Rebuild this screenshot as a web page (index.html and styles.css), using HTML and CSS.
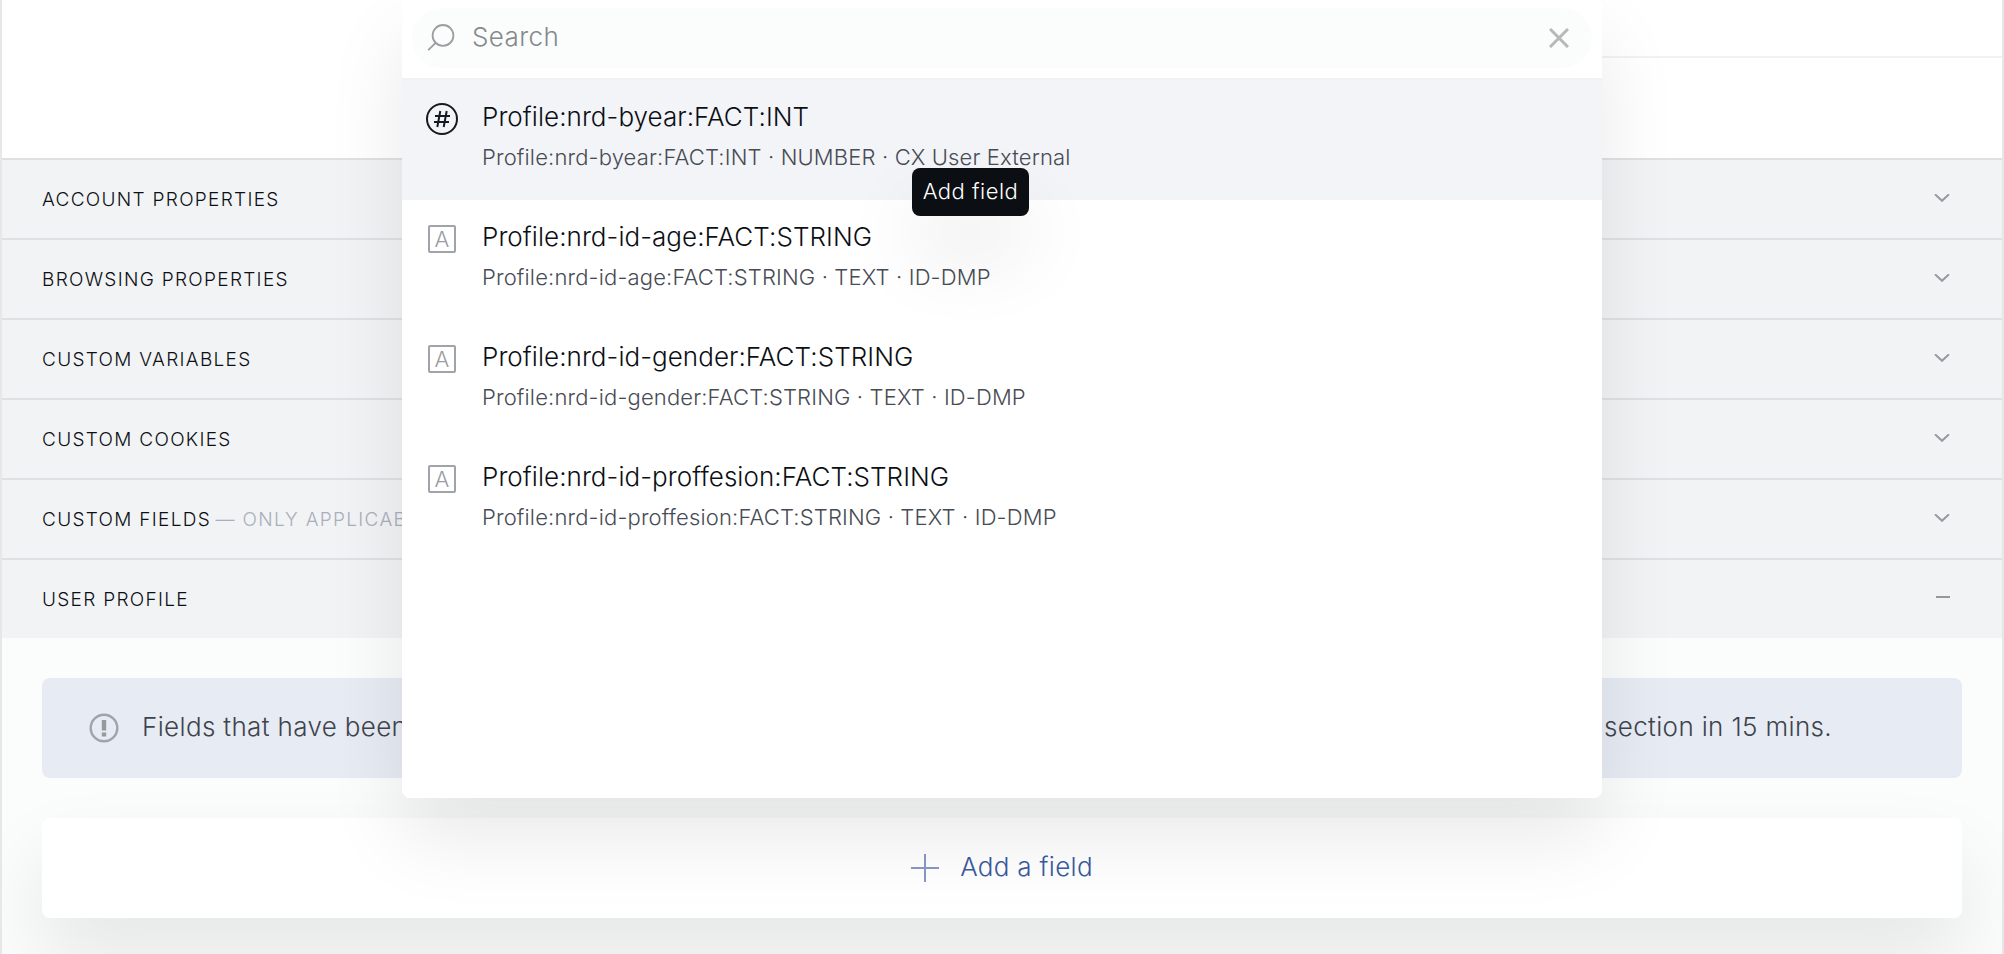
FILE: index.html
```
<!DOCTYPE html>
<html lang="en">
	<head>
		<meta charset="UTF-8">
		<meta name="viewport" content="width=device-width,initial-scale=1">
		<title>Add a field</title>
		<link rel="stylesheet" href="styles.css">
	</head>
	<body>
		<main class="panel">
			<div class="panel-top">
				<div class="panel-top__side"></div>
			</div>
			<section class="section">
				<h2 class="section__title">Account properties</h2>
				<svg class="section__icon" width="16" height="8" viewBox="0 0 16 8"><path d="M1 .3l7 6.5 7-6.5"/></svg>
			</section>
			<section class="section">
				<h2 class="section__title">Browsing properties</h2>
				<svg class="section__icon" width="16" height="8" viewBox="0 0 16 8"><path d="M1 .3l7 6.5 7-6.5"/></svg>
			</section>
			<section class="section">
				<h2 class="section__title">Custom variables</h2>
				<svg class="section__icon" width="16" height="8" viewBox="0 0 16 8"><path d="M1 .3l7 6.5 7-6.5"/></svg>
			</section>
			<section class="section">
				<h2 class="section__title">Custom cookies</h2>
				<svg class="section__icon" width="16" height="8" viewBox="0 0 16 8"><path d="M1 .3l7 6.5 7-6.5"/></svg>
			</section>
			<section class="section">
				<h2 class="section__title">Custom fields <span class="section__note">— only applicable</span></h2>
				<svg class="section__icon" width="16" height="8" viewBox="0 0 16 8"><path d="M1 .3l7 6.5 7-6.5"/></svg>
			</section>
			<section class="section">
				<h2 class="section__title">User profile</h2>
				<svg class="section__icon" width="16" height="8" viewBox="0 0 16 8"><path d="M2 3h14"/></svg>
			</section>
			<div class="section-body">
				<div class="notice">
					<svg class="notice__icon" width="30" height="30" viewBox="0 0 30 30">
						<circle cx="15" cy="15" r="13.3"/>
						<path d="M15 7v10.5M15 19.5v4"/>
					</svg>
					<p class="notice__text"><span>Fields that have been</span><span>section in 15 mins.</span></p>
				</div>
				<button class="add-button" type="button">
					<svg class="add-button__icon" width="28" height="28" viewBox="0 0 28 28"><path d="M14 0v28M0 14h28"/></svg>
					<span>Add a field</span>
				</button>
			</div>
		</main>

		<div class="dialog">
			<div class="dialog__head">
				<div class="search">
					<svg class="search__icon" width="28" height="28" viewBox="0 0 28 28">
						<circle cx="16" cy="11.4" r="10.4"/>
						<path d="M8.6 18.8L1.2 26.2"/>
					</svg>
					<span class="search__text">Search</span>
					<svg class="search__clear" width="20" height="20" viewBox="0 0 20 20"><path d="M1 1l18 18M19 1L1 19"/></svg>
				</div>
			</div>
			<ul class="list">
				<li class="item is-active">
					<svg class="item__number" width="32" height="32" viewBox="0 0 32 32">
						<circle cx="16" cy="16" r="15"/>
						<path d="M14.3 8l-3 16M20.7 8l-3 16M9 13h15M8 19h15"/>
					</svg>
					<div>
						<p class="item__name">Profile:nrd-byear:FACT:INT</p>
						<p class="item__meta">Profile:nrd-byear:FACT:INT · NUMBER · CX User External</p>
					</div>
					<span class="tooltip">Add field</span>
				</li>
				<li class="item">
					<span class="item__string">A</span>
					<div>
						<p class="item__name">Profile:nrd-id-age:FACT:STRING</p>
						<p class="item__meta">Profile:nrd-id-age:FACT:STRING · TEXT · ID-DMP</p>
					</div>
				</li>
				<li class="item">
					<span class="item__string">A</span>
					<div>
						<p class="item__name">Profile:nrd-id-gender:FACT:STRING</p>
						<p class="item__meta">Profile:nrd-id-gender:FACT:STRING · TEXT · ID-DMP</p>
					</div>
				</li>
				<li class="item">
					<span class="item__string">A</span>
					<div>
						<p class="item__name">Profile:nrd-id-proffesion:FACT:STRING</p>
						<p class="item__meta">Profile:nrd-id-proffesion:FACT:STRING · TEXT · ID-DMP</p>
					</div>
				</li>
			</ul>
		</div>
	</body>
</html>
```
FILE: styles.css
```
*
{
	box-sizing: border-box;
}

body
{
	margin: 0;
	height: 954px;
	overflow: hidden;
	background-color: #fff;
	color: #0c0f14;
	font-family: Inter, "Liberation Sans", sans-serif;
	font-weight: 350;
	font-size: 26px;
}

h2,
p,
ul
{
	margin: 0;
	padding: 0;
	font-weight: 350;
}

svg
{
	display: block;
	flex: none;
	fill: none;
}

.panel
{
	height: 954px;
	overflow: hidden;
	border-left: 2px solid #e6e7e9;
	border-right: 2px solid #e6e7e9;
	background-color: #fbfdfc;
}

.panel-top
{
	display: flex;
	justify-content: flex-end;
	height: 158px;
	background-color: #fff;
}

.panel-top__side
{
	width: 50%;
	height: 58px;
	border-bottom: 2px solid #f2f2f3;
}

/* accordion rows */
.section
{
	display: flex;
	align-items: center;
	justify-content: space-between;
	height: 80px;
	padding: 0 52px 0 40px;
	border-top: 2px solid #dfe0e3;
	background-color: #f2f3f5;
}

.section__title
{
	font-size: 19px;
	letter-spacing: 1.3px;
	text-transform: uppercase;
}

.section__note
{
	margin-left: -2px;
	color: #a9afbb;
}

.section__icon
{
	margin-bottom: 3px;
	stroke: #96989c;
	stroke-width: 2;
}

.section-body
{
	padding: 40px;
}

.notice
{
	display: flex;
	align-items: center;
	height: 100px;
	padding: 0 130px 0 47px;
	border-radius: 8px;
	background-color: #e7ebf4;
}

.notice__icon
{
	margin-right: 23px;
	stroke: #a0a3a8;
	stroke-width: 2.4;
}

.notice__icon path
{
	stroke: #96999e;
	stroke-width: 4.4;
}

.notice__text
{
	display: flex;
	flex: 1;
	justify-content: space-between;
	padding-bottom: 3px;
	color: #3f434c;
	letter-spacing: 0.35px;
}

.add-button
{
	display: flex;
	align-items: center;
	justify-content: center;
	gap: 21px;
	width: 100%;
	height: 100px;
	margin-top: 40px;
	padding: 0;
	border: 0;
	border-radius: 8px;
	background-color: #fff;
	box-shadow: 0 40px 80px rgba(0, 0, 0, 0.09);
	color: #3a5a9f;
	font: inherit;
	letter-spacing: 0.3px;
}

.add-button span
{
	padding-bottom: 3px;
}

.add-button__icon
{
	stroke: #8799c5;
	stroke-width: 2;
}

/* field picker */
.dialog
{
	position: absolute;
	top: -2px;
	left: 402px;
	width: 1200px;
	height: 800px;
	border-radius: 8px;
	background-color: #fff;
	box-shadow: 0 40px 80px rgba(0, 0, 0, 0.09);
}

.dialog__head
{
	height: 82px;
	padding: 10px;
	border-bottom: 2px solid #f2f2f3;
}

.search
{
	display: flex;
	align-items: center;
	height: 60px;
	padding: 0 23px 0 15px;
	border-radius: 30px;
	background-color: #fbfdfc;
}

.search__icon
{
	stroke: #9b9da0;
	stroke-width: 1.8;
}

.search__text
{
	flex: 1;
	padding: 0 0 3px 17px;
	color: #85888d;
	letter-spacing: 0.4px;
}

.search__clear
{
	stroke: #b7b9b9;
	stroke-width: 3;
}

.list
{
	list-style: none;
}

.item
{
	position: relative;
	display: grid;
	grid-template-columns: 56px 1fr;
	align-items: start;
	height: 120px;
	padding: 20px 24px 0;
}

.item.is-active
{
	background-color: #f3f4f8;
}

.item__number
{
	margin-top: 3px;
	stroke: #141a23;
	stroke-width: 2;
}

.item__string
{
	width: 28px;
	height: 28px;
	margin: 5px 0 0 2px;
	border: 2px solid #a0a3a7;
	border-radius: 2px;
	color: #9a9da1;
	font-size: 22px;
	line-height: 25px;
	text-align: center;
}

.item__name
{
	line-height: 33px;
	letter-spacing: 0.05px;
}

.item__meta
{
	margin-top: 8px;
	color: #474b54;
	font-size: 22px;
	line-height: 32px;
	letter-spacing: 0.15px;
}

.tooltip
{
	position: absolute;
	z-index: 1;
	top: 88px;
	left: 510px;
	width: 117px;
	height: 48px;
	border-radius: 8px;
	background-color: #0b0e13;
	box-shadow: 0 40px 80px rgba(0, 0, 0, 0.09);
	color: #fff;
	font-size: 22px;
	line-height: 46px;
	letter-spacing: 0.5px;
	text-align: center;
}
```
